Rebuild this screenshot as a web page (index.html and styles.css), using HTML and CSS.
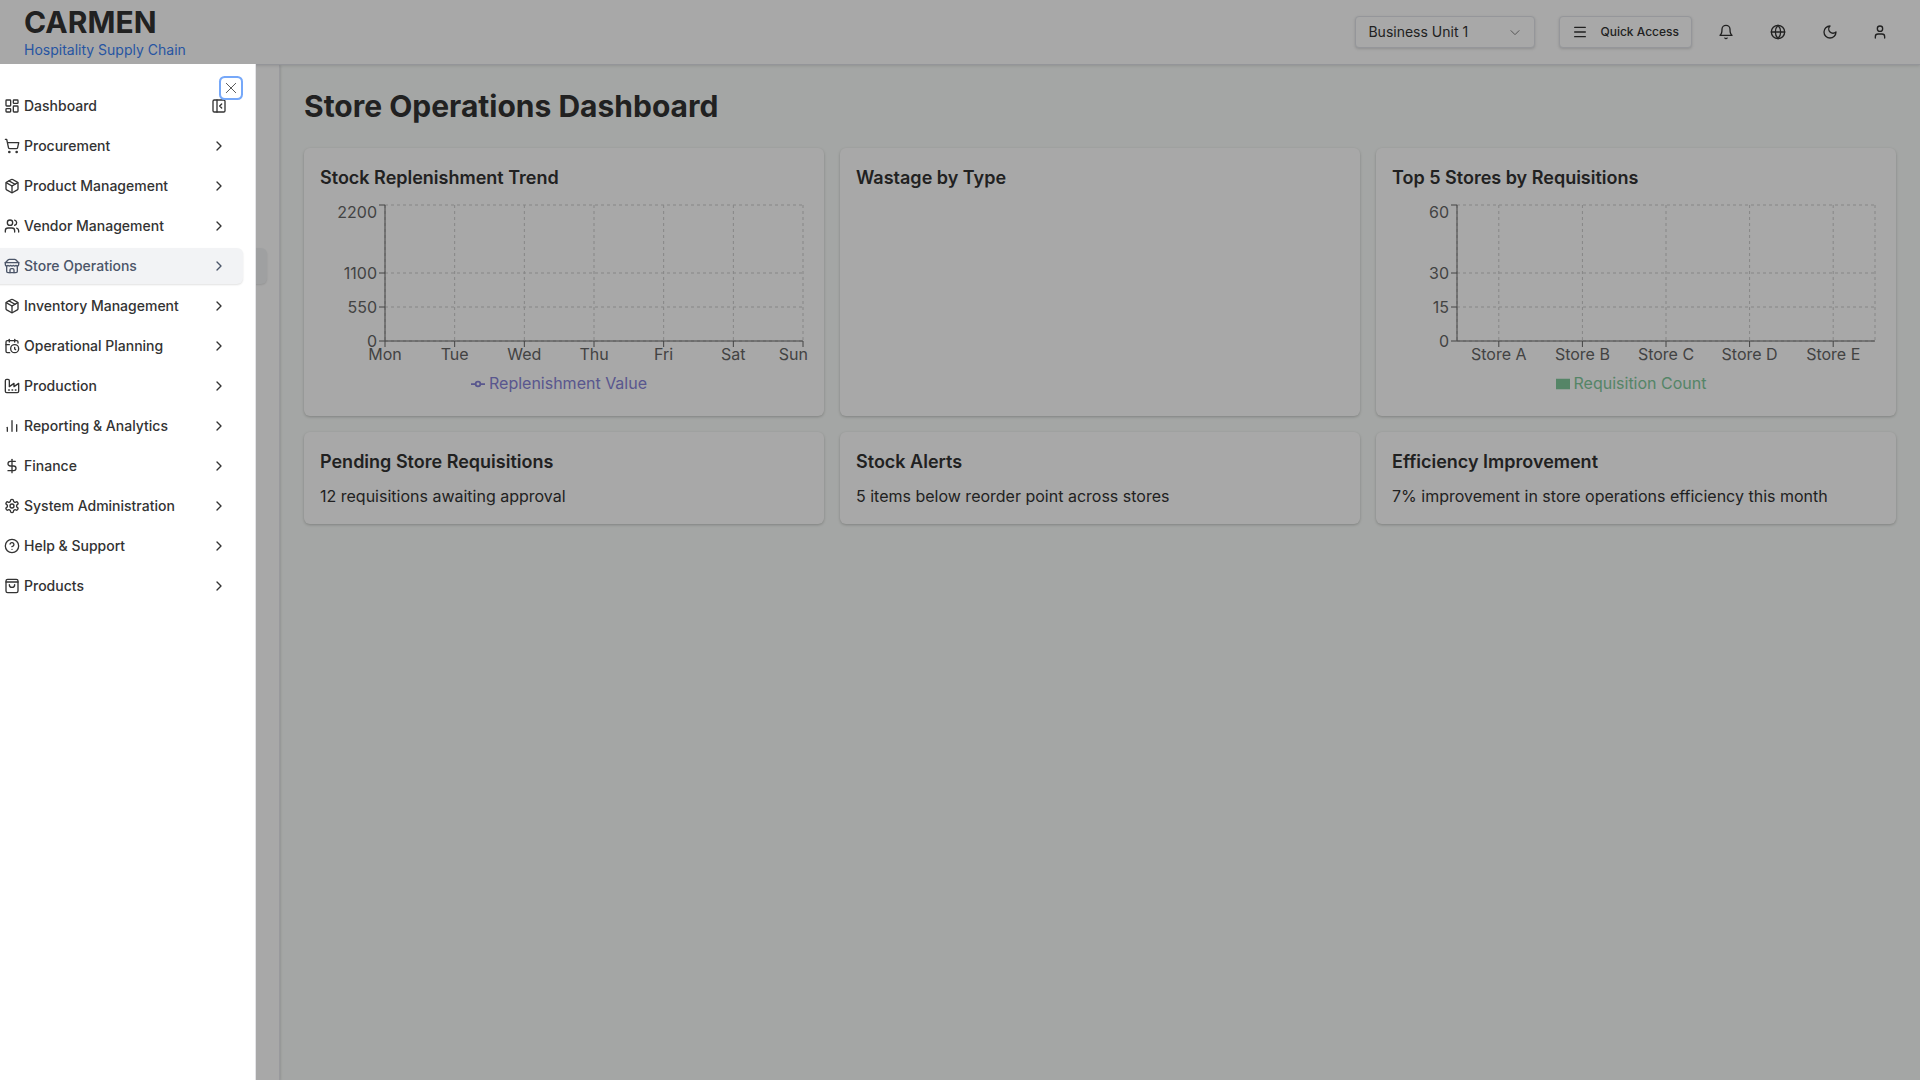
FILE: index.html
```html
<!DOCTYPE html>
<html lang="en">
<head>
<meta charset="utf-8">
<meta name="viewport" content="width=device-width, initial-scale=1">
<title>Store Operations Dashboard - Carmen</title>
<link rel="stylesheet" href="styles.css">
</head>
<body>
<svg class="sprite" aria-hidden="true">
  <symbol id="chevron" viewBox="0 0 24 24"><path d="m9 18 6-6-6-6"/></symbol>
  <symbol id="box" viewBox="0 0 24 24"><path d="m7.5 4.27 9 5.15"/><path d="M21 8a2 2 0 0 0-1-1.73l-7-4a2 2 0 0 0-2 0l-7 4A2 2 0 0 0 3 8v8a2 2 0 0 0 1 1.73l7 4a2 2 0 0 0 2 0l7-4A2 2 0 0 0 21 16Z"/><path d="m3.3 7 8.7 5 8.7-5"/><path d="M12 22V12"/></symbol>
</svg>

<header class="topbar">
  <a class="brand" href="#"><span class="brand-name">CARMEN</span><span class="brand-sub">Hospitality Supply Chain</span></a>
  <div class="tools">
    <div class="select-wrap">
      <select class="unit" aria-label="Business unit"><option>Business Unit 1</option><option>Business Unit 2</option></select>
      <svg class="icon select-arrow" viewBox="0 0 24 24"><path d="m6 10 6 6 6-6"/></svg>
    </div>
    <button class="quick" type="button"><svg class="icon" viewBox="0 0 24 24"><path d="M4 5h16M4 12h16M4 19h16"/></svg>Quick Access</button>
    <button class="tool" type="button" aria-label="Notifications"><svg class="icon" viewBox="0 0 24 24"><path d="M6 8a6 6 0 0 1 12 0c0 7 3 9 3 9H3s3-2 3-9"/><path d="M10.3 21a1.94 1.94 0 0 0 3.4 0"/></svg></button>
    <button class="tool" type="button" aria-label="Language"><svg class="icon" viewBox="0 0 24 24"><circle cx="12" cy="12" r="10"/><path d="M12 2a14.5 14.5 0 0 0 0 20 14.5 14.5 0 0 0 0-20"/><path d="M2 12h20"/></svg></button>
    <button class="tool" type="button" aria-label="Dark mode"><svg class="icon" viewBox="0 0 24 24"><path d="M12 3a6 6 0 0 0 9 9 9 9 0 1 1-9-9Z"/></svg></button>
    <button class="tool account" type="button" aria-label="Account"><svg class="icon" viewBox="0 0 24 24"><path d="M19 21v-2a4 4 0 0 0-4-4H9a4 4 0 0 0-4 4v2"/><circle cx="12" cy="7" r="4"/></svg></button>
  </div>
</header>

<div class="shell">
  <aside class="rail"><div class="rail-active"></div></aside>
  <main class="content">
    <h1>Store Operations Dashboard</h1>
    <div class="cards">
      <section class="card">
        <h2>Stock Replenishment Trend</h2>
        <div class="chart">
          <svg class="chart-svg">
            <svg class="plot" x="65" y="5" height="136">
              <g class="grid">
                <line x1="0" y1="0" x2="100%" y2="0"/><line x1="0" y1="68" x2="100%" y2="68"/><line x1="0" y1="102" x2="100%" y2="102"/><line x1="0" y1="136" x2="100%" y2="136"/>
                <line x1="0" y1="0" x2="0" y2="136"/><line x1="16.667%" y1="0" x2="16.667%" y2="136"/><line x1="33.333%" y1="0" x2="33.333%" y2="136"/><line x1="50%" y1="0" x2="50%" y2="136"/><line x1="66.667%" y1="0" x2="66.667%" y2="136"/><line x1="83.333%" y1="0" x2="83.333%" y2="136"/><line x1="100%" y1="0" x2="100%" y2="136"/>
              </g>
              <g class="axis">
                <line x1="0" y1="136" x2="100%" y2="136"/><line x1="0" y1="0" x2="0" y2="136"/>
                <line x1="-6" y1="0" x2="0" y2="0"/><line x1="-6" y1="68" x2="0" y2="68"/><line x1="-6" y1="102" x2="0" y2="102"/><line x1="-6" y1="136" x2="0" y2="136"/>
                <line x1="0" y1="136" x2="0" y2="142"/><line x1="16.667%" y1="136" x2="16.667%" y2="142"/><line x1="33.333%" y1="136" x2="33.333%" y2="142"/><line x1="50%" y1="136" x2="50%" y2="142"/><line x1="66.667%" y1="136" x2="66.667%" y2="142"/><line x1="83.333%" y1="136" x2="83.333%" y2="142"/><line x1="100%" y1="136" x2="100%" y2="142"/>
              </g>
              <g class="labels end"><text x="-8" y="13">2200</text><text x="-8" y="74">1100</text><text x="-8" y="108">550</text><text x="-8" y="142">0</text></g>
              <g class="labels mid"><text x="0" y="155">Mon</text><text x="16.667%" y="155">Tue</text><text x="33.333%" y="155">Wed</text><text x="50%" y="155">Thu</text><text x="66.667%" y="155">Fri</text><text x="83.333%" y="155">Sat</text></g>
              <g class="labels end"><text x="100%" dx="5" y="155">Sun</text></g>
            </svg>
          </svg>
          <p class="legend violet"><svg class="mark" viewBox="0 0 32 32"><path d="M0 16h10.67M21.33 16H32"/><circle cx="16" cy="16" r="5.33"/></svg>Replenishment Value</p>
        </div>
      </section>
      <section class="card"><h2>Wastage by Type</h2></section>
      <section class="card">
        <h2>Top 5 Stores by Requisitions</h2>
        <div class="chart">
          <svg class="chart-svg">
            <svg class="plot" x="65" y="5" height="136">
              <g class="grid">
                <line x1="0" y1="0" x2="100%" y2="0"/><line x1="0" y1="68" x2="100%" y2="68"/><line x1="0" y1="102" x2="100%" y2="102"/><line x1="0" y1="136" x2="100%" y2="136"/>
                <line x1="0" y1="0" x2="0" y2="136"/><line x1="10%" y1="0" x2="10%" y2="136"/><line x1="30%" y1="0" x2="30%" y2="136"/><line x1="50%" y1="0" x2="50%" y2="136"/><line x1="70%" y1="0" x2="70%" y2="136"/><line x1="90%" y1="0" x2="90%" y2="136"/><line x1="100%" y1="0" x2="100%" y2="136"/>
              </g>
              <g class="axis">
                <line x1="0" y1="136" x2="100%" y2="136"/><line x1="0" y1="0" x2="0" y2="136"/>
                <line x1="-6" y1="0" x2="0" y2="0"/><line x1="-6" y1="68" x2="0" y2="68"/><line x1="-6" y1="102" x2="0" y2="102"/><line x1="-6" y1="136" x2="0" y2="136"/>
                <line x1="10%" y1="136" x2="10%" y2="142"/><line x1="30%" y1="136" x2="30%" y2="142"/><line x1="50%" y1="136" x2="50%" y2="142"/><line x1="70%" y1="136" x2="70%" y2="142"/><line x1="90%" y1="136" x2="90%" y2="142"/>
              </g>
              <g class="labels end"><text x="-8" y="13">60</text><text x="-8" y="74">30</text><text x="-8" y="108">15</text><text x="-8" y="142">0</text></g>
              <g class="labels mid"><text x="10%" y="155">Store A</text><text x="30%" y="155">Store B</text><text x="50%" y="155">Store C</text><text x="70%" y="155">Store D</text><text x="90%" y="155">Store E</text></g>
            </svg>
          </svg>
          <p class="legend green"><svg class="mark" viewBox="0 0 32 32"><path class="fill" d="M0 4h32v24H0z"/></svg>Requisition Count</p>
        </div>
      </section>
      <section class="card"><h2>Pending Store Requisitions</h2><p>12 requisitions awaiting approval</p></section>
      <section class="card"><h2>Stock Alerts</h2><p>5 items below reorder point across stores</p></section>
      <section class="card"><h2>Efficiency Improvement</h2><p>7% improvement in store operations efficiency this month</p></section>
    </div>
  </main>
</div>

<div class="backdrop"></div>

<div class="drawer" role="dialog" aria-label="Navigation">
  <nav class="menu">
    <a class="item" href="#"><svg class="icon" viewBox="0 0 24 24"><rect width="7" height="9" x="3" y="3" rx="1"/><rect width="7" height="5" x="14" y="3" rx="1"/><rect width="7" height="9" x="14" y="12" rx="1"/><rect width="7" height="5" x="3" y="16" rx="1"/></svg><span>Dashboard</span><svg class="icon" viewBox="0 0 24 24"><rect width="18" height="18" x="3" y="3" rx="2"/><path d="M9 3v18"/><path d="m16 15-3-3 3-3"/></svg></a>
    <a class="item" href="#"><svg class="icon" viewBox="0 0 24 24"><circle cx="8" cy="21" r="1"/><circle cx="19" cy="21" r="1"/><path d="M2.05 2.05h2l2.66 12.42a2 2 0 0 0 2 1.58h9.78a2 2 0 0 0 1.95-1.57l1.65-7.43H5.12"/></svg><span>Procurement</span><svg class="icon"><use href="#chevron"/></svg></a>
    <a class="item" href="#"><svg class="icon"><use href="#box"/></svg><span>Product Management</span><svg class="icon"><use href="#chevron"/></svg></a>
    <a class="item" href="#"><svg class="icon" viewBox="0 0 24 24"><path d="M16 21v-2a4 4 0 0 0-4-4H6a4 4 0 0 0-4 4v2"/><circle cx="9" cy="7" r="4"/><path d="M22 21v-2a4 4 0 0 0-3-3.87"/><path d="M16 3.13a4 4 0 0 1 0 7.75"/></svg><span>Vendor Management</span><svg class="icon"><use href="#chevron"/></svg></a>
    <a class="item active" href="#"><svg class="icon" viewBox="0 0 24 24"><path d="m2 7 4.41-4.41A2 2 0 0 1 7.83 2h8.34a2 2 0 0 1 1.42.59L22 7"/><path d="M4 12v8a2 2 0 0 0 2 2h12a2 2 0 0 0 2-2v-8"/><path d="M15 22v-4a2 2 0 0 0-2-2h-2a2 2 0 0 0-2 2v4"/><path d="M2 7h20"/><path d="M22 7v3a2 2 0 0 1-2 2a2.7 2.7 0 0 1-1.59-.63.7.7 0 0 0-.82 0A2.7 2.7 0 0 1 16 12a2.7 2.7 0 0 1-1.59-.63.7.7 0 0 0-.82 0A2.7 2.7 0 0 1 12 12a2.7 2.7 0 0 1-1.59-.63.7.7 0 0 0-.82 0A2.7 2.7 0 0 1 8 12a2.7 2.7 0 0 1-1.59-.63.7.7 0 0 0-.82 0A2.7 2.7 0 0 1 4 12a2 2 0 0 1-2-2V7"/></svg><span>Store Operations</span><svg class="icon"><use href="#chevron"/></svg></a>
    <a class="item" href="#"><svg class="icon"><use href="#box"/></svg><span>Inventory Management</span><svg class="icon"><use href="#chevron"/></svg></a>
    <a class="item" href="#"><svg class="icon" viewBox="0 0 24 24"><path d="M21 7.5V6a2 2 0 0 0-2-2H5a2 2 0 0 0-2 2v14a2 2 0 0 0 2 2h3.5"/><path d="M16 2v4"/><path d="M8 2v4"/><path d="M3 10h5"/><path d="M17.5 17.5 16 16.3V14"/><circle cx="16" cy="16" r="6"/></svg><span>Operational Planning</span><svg class="icon"><use href="#chevron"/></svg></a>
    <a class="item" href="#"><svg class="icon" viewBox="0 0 24 24"><path d="M2 20a2 2 0 0 0 2 2h16a2 2 0 0 0 2-2V8l-7 5V8l-7 5V4a2 2 0 0 0-2-2H4a2 2 0 0 0-2 2Z"/><path d="M17 18h1"/><path d="M12 18h1"/><path d="M7 18h1"/></svg><span>Production</span><svg class="icon"><use href="#chevron"/></svg></a>
    <a class="item" href="#"><svg class="icon" viewBox="0 0 24 24"><path d="M5 20v-6"/><path d="M12 20V4"/><path d="M19 20V10"/></svg><span>Reporting &amp; Analytics</span><svg class="icon"><use href="#chevron"/></svg></a>
    <a class="item" href="#"><svg class="icon" viewBox="0 0 24 24"><path d="M12 2v20"/><path d="M17 5H9.5a3.5 3.5 0 0 0 0 7h5a3.5 3.5 0 0 1 0 7H6"/></svg><span>Finance</span><svg class="icon"><use href="#chevron"/></svg></a>
    <a class="item" href="#"><svg class="icon" viewBox="0 0 24 24"><path d="M12.22 2h-.44a2 2 0 0 0-2 2v.18a2 2 0 0 1-1 1.73l-.43.25a2 2 0 0 1-2 0l-.15-.08a2 2 0 0 0-2.73.73l-.22.38a2 2 0 0 0 .73 2.73l.15.1a2 2 0 0 1 1 1.72v.51a2 2 0 0 1-1 1.74l-.15.09a2 2 0 0 0-.73 2.73l.22.38a2 2 0 0 0 2.73.73l.15-.08a2 2 0 0 1 2 0l.43.25a2 2 0 0 1 1 1.73V20a2 2 0 0 0 2 2h.44a2 2 0 0 0 2-2v-.18a2 2 0 0 1 1-1.73l.43-.25a2 2 0 0 1 2 0l.15.08a2 2 0 0 0 2.73-.73l.22-.39a2 2 0 0 0-.73-2.73l-.15-.08a2 2 0 0 1-1-1.74v-.5a2 2 0 0 1 1-1.74l.15-.09a2 2 0 0 0 .73-2.73l-.22-.38a2 2 0 0 0-2.73-.73l-.15.08a2 2 0 0 1-2 0l-.43-.25a2 2 0 0 1-1-1.73V4a2 2 0 0 0-2-2z"/><circle cx="12" cy="12" r="3"/></svg><span>System Administration</span><svg class="icon"><use href="#chevron"/></svg></a>
    <a class="item" href="#"><svg class="icon" viewBox="0 0 24 24"><circle cx="12" cy="12" r="10"/><path d="M9.09 9a3 3 0 0 1 5.83 1c0 2-3 3-3 3"/><path d="M12 17h.01"/></svg><span>Help &amp; Support</span><svg class="icon"><use href="#chevron"/></svg></a>
    <a class="item" href="#"><svg class="icon" viewBox="0 0 24 24"><rect x="3" y="2" width="18" height="20" rx="2.5"/><path d="M3 6h18"/><path d="M16 10a4 4 0 0 1-8 0"/></svg><span>Products</span><svg class="icon"><use href="#chevron"/></svg></a>
  </nav>
  <button class="close" type="button" aria-label="Close"><svg class="icon" viewBox="0 0 24 24"><path d="M5 5l14 14M19 5 5 19"/></svg></button>
</div>
</body>
</html>
```
FILE: styles.css
```css
* { box-sizing: border-box; }
body {
  margin: 0;
  min-height: 100vh;
  display: flex;
  flex-direction: column;
  font-family: Inter, "Liberation Sans", sans-serif;
  font-size: 16px;
  line-height: 24px;
  color: #333;
  background: #f9fcfa;
}
h1, h2, p { margin: 0; }
a { color: inherit; text-decoration: none; }
button, select { font: inherit; color: inherit; margin: 0; }
.sprite { position: absolute; width: 0; height: 0; }
.icon {
  width: 16px;
  height: 16px;
  flex: none;
  fill: none;
  stroke: currentColor;
  stroke-width: 2;
  stroke-linecap: round;
  stroke-linejoin: round;
}

.topbar {
  position: relative;
  z-index: 1;
  display: flex;
  justify-content: space-between;
  align-items: center;
  height: 64px;
  padding: 0 24px;
  background: #fff;
  box-shadow: 0 1px 0 #e1e2e8, 0 2px 3px rgba(0, 0, 0, .12);
}
.brand { display: flex; flex-direction: column; }
.brand-name { font-size: 30px; line-height: 36px; font-weight: 700; }
.brand-sub { font-size: 14px; line-height: 20px; color: #3b82f6; }
.tools { display: flex; align-items: center; gap: 16px; }
.select-wrap { position: relative; width: 180px; margin-right: 8px; }
.unit, .quick {
  height: 32px;
  border: 1px solid #e2e4ea;
  border-radius: 4px;
  background: #fff;
  box-shadow: 0 1px 3px rgba(0, 0, 0, .16);
}
.unit {
  display: block;
  width: 100%;
  padding: 0 12px;
  appearance: none;
  font-size: 14px;
}
.select-arrow { position: absolute; right: 12px; top: 8px; opacity: .6; }
.select-arrow path { stroke-width: 1.5; }
.quick {
  display: flex;
  align-items: center;
  gap: 12px;
  padding: 0 12px;
  font-size: 12px;
  font-weight: 500;
}
.tool {
  width: 36px;
  height: 36px;
  display: flex;
  align-items: center;
  justify-content: center;
  padding: 0;
  border: 0;
  background: none;
}
.account { width: 32px; }

.shell { flex: 1; display: flex; }
.rail {
  width: 280px;
  flex: none;
  padding: 184px 12px 0;
  background: #fff;
  border-right: 1px solid #e8e9ee;
  box-shadow: 0 1px 3px rgba(0, 0, 0, .2);
}
.rail-active {
  height: 36px;
  border-radius: 6px;
  background: #f1f3f5;
  box-shadow: 0 1px 2px rgba(0, 0, 0, .12);
}
.content { flex: 1; min-width: 0; padding: 24px; }
h1 { font-size: 30px; line-height: 36px; font-weight: 700; margin-bottom: 24px; }
.cards { display: grid; grid-template-columns: repeat(3, 1fr); gap: 16px; }
.card {
  min-width: 0;
  padding: 16px;
  border-radius: 6px;
  background: #fff;
  box-shadow: 0 1px 3px rgba(0, 0, 0, .22);
}
h2 { font-size: 18px; line-height: 28px; font-weight: 600; margin-bottom: 8px; }

.chart { height: 200px; }
.chart-svg { display: block; width: 100%; height: 171px; overflow: visible; }
.plot { width: calc(100% - 70px); overflow: visible; }
.grid { stroke: #ccc; stroke-dasharray: 3 3; }
.axis { stroke: #666; }
.labels { fill: #666; font-size: 16px; }
.end { text-anchor: end; }
.mid { text-anchor: middle; }
.legend { display: flex; align-items: center; justify-content: center; gap: 4px; padding-right: 10px; }
.mark { width: 14px; height: 14px; margin-top: 2px; fill: none; stroke: currentColor; stroke-width: 4; }
.mark .fill { fill: currentColor; stroke: none; }
.violet { color: #8884d8; }
.green { color: #82ca9d; }

.backdrop { position: fixed; inset: 0; z-index: 2; background: rgba(0, 0, 0, .34); }

.drawer {
  position: fixed;
  top: 64px;
  bottom: 0;
  left: 0;
  z-index: 3;
  width: 256px;
  padding: 24px 12px;
  border-right: 1px solid #e4e4e7;
  background: #fff;
}
.menu { display: flex; flex-direction: column; gap: 4px; margin-left: -24px; }
.item {
  display: flex;
  align-items: center;
  gap: 4px;
  height: 36px;
  padding: 0 16px;
  border-radius: 6px;
  font-size: 14px;
  line-height: 20px;
  font-weight: 500;
}
.item span { flex: 1; }
.active { color: #4b5568; background: #f2f3f5; box-shadow: 0 1px 2px rgba(0, 0, 0, .12); }
.close {
  position: absolute;
  top: 16px;
  right: 16px;
  display: flex;
  padding: 0;
  border: 0;
  border-radius: 2px;
  background: #fff;
  box-shadow: 0 0 0 2px #fff, 0 0 0 4px #76a8f9;
}
.close .icon { opacity: .8; stroke-width: 1.5; }
```
